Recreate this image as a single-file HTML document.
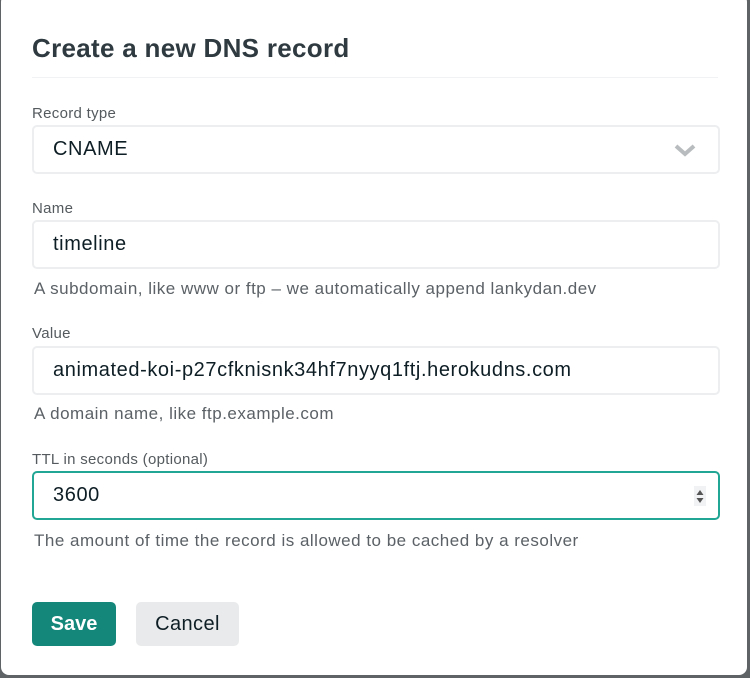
<!DOCTYPE html>
<html><head><style>
html,body{margin:0;padding:0;}
body{width:750px;height:678px;background:#5f6366;position:relative;overflow:hidden;font-family:"Liberation Sans",Arial,sans-serif;}
.dlg{position:absolute;left:1px;top:-6px;width:746px;height:681px;background:#fff;border-radius:8px;}
h1{position:absolute;left:31px;top:39px;margin:0;font-size:26px;font-weight:bold;color:#2e3a40;letter-spacing:0.3px;}
.hr{position:absolute;left:31px;top:83px;width:686px;height:1px;background:#f1f2f3;}
.lbl{position:absolute;left:31px;font-size:15px;color:#545a5e;letter-spacing:0.3px;}
.inp{position:absolute;left:31px;width:684px;height:45px;border:2px solid #eceeef;border-radius:5px;box-sizing:content-box;font-size:20px;color:#0e1e25;line-height:45px;letter-spacing:0.6px;}
.inp span{position:absolute;left:19px;}
.help{position:absolute;left:33px;font-size:17px;color:#5b6166;letter-spacing:0.5px;}
.btn{position:absolute;top:608px;height:44px;border-radius:5px;font-size:20px;font-weight:bold;line-height:44px;text-align:center;}
</style></head><body>
<div class="dlg">
<h1>Create a new DNS record</h1>
<div class="hr"></div>
<div class="lbl" style="top:111px">Record type</div>
<div class="inp" style="top:131px"><span>CNAME</span>
<svg style="position:absolute;right:22px;top:16px" width="22" height="14" viewBox="0 0 22 14"><path d="M2 3 L11 11 L20 3" stroke="#b9bcbe" stroke-width="4" fill="none"/></svg></div>
<div class="lbl" style="top:206px">Name</div>
<div class="inp" style="top:226px"><span>timeline</span></div>
<div class="help" style="top:285px">A subdomain, like www or ftp – we automatically append lankydan.dev</div>
<div class="lbl" style="top:331px">Value</div>
<div class="inp" style="top:352px"><span>animated-koi-p27cfknisnk34hf7nyyq1ftj.herokudns.com</span></div>
<div class="help" style="top:410px">A domain name, like ftp.example.com</div>
<div class="lbl" style="top:457px">TTL in seconds (optional)</div>
<div class="inp" style="top:477px;border-color:#21a594"><span>3600</span>
<svg style="position:absolute;right:12px;top:13px" width="12" height="20" viewBox="0 0 12 20"><rect width="12" height="20" fill="#f1f2f3"/><path d="M2.5 9 L6 4 L9.5 9Z M2.5 12 L6 17 L9.5 12Z" fill="#555"/></svg></div>
<div class="help" style="top:537px">The amount of time the record is allowed to be cached by a resolver</div>
<div class="btn" style="left:31px;width:84px;background:#14877a;color:#fff">Save</div>
<div class="btn" style="left:135px;width:103px;background:#e9eaeb;color:#0e1e25;font-weight:normal;letter-spacing:0.4px">Cancel</div>
</div>
</body></html>
